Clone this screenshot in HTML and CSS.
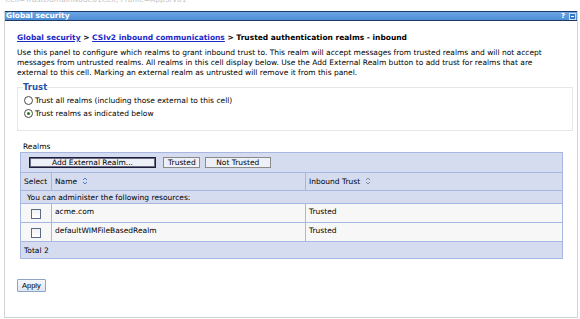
FILE: index.html
```html
<!DOCTYPE html>
<html lang="en">
<head>
  <meta charset="UTF-8">
  <title>Trusted authentication realms - inbound</title>
  <link rel="stylesheet" href="styles.css">
</head>
<body>
  <div class="cell-line">Cell=TrustDomainNode01Cell, Profile=AppSrv01</div>
  <div class="portlet">
    <div class="portlet-title">
      <span class="title-text">Global security</span>
      <span class="title-icons">
        <span class="help-icon">?</span>
        <span class="min-icon"></span>
      </span>
    </div>
    <div class="portlet-body">
      <div class="breadcrumb">
        <a href="#">Global security</a> &gt; <a href="#">CSIv2 inbound communications</a> &gt; <b>Trusted authentication realms - inbound</b>
      </div>
      <p class="desc">Use this panel to configure which realms to grant inbound trust to. This realm will accept messages from trusted realms and will not accept messages from untrusted realms. All realms in this cell display below. Use the Add External Realm button to add trust for realms that are external to this cell. Marking an external realm as untrusted will remove it from this panel.</p>

      <fieldset class="trust">
        <legend>Trust</legend>
        <label class="radio-row"><span class="radio"></span>Trust all realms (including those external to this cell)</label>
        <label class="radio-row"><span class="radio checked"></span>Trust realms as indicated below</label>
      </fieldset>

      <div class="realms-label">Realms</div>
      <table class="realms">
        <tr class="button-row">
          <td colspan="3">
            <button class="tbl-btn focused">Add External Realm...</button>
            <button class="tbl-btn btn-trusted">Trusted</button>
            <button class="tbl-btn btn-not">Not Trusted</button>
          </td>
        </tr>
        <tr class="head-row">
          <th class="col-select">Select</th>
          <th class="col-name">Name <svg class="sort" width="6" height="8" viewBox="0 0 6 8"><path d="M1 3 L3 1 L5 3 M1 5 L3 7 L5 5" fill="none" stroke="#4f7bc9" stroke-width="1"/></svg></th>
          <th>Inbound Trust <svg class="sort" width="6" height="8" viewBox="0 0 6 8"><path d="M1 3 L3 1 L5 3 M1 5 L3 7 L5 5" fill="none" stroke="#6b7590" stroke-width="0.8"/></svg></th>
        </tr>
        <tr class="info-row">
          <td colspan="3">You can administer the following resources:</td>
        </tr>
        <tr class="data-row">
          <td class="check-cell"><span class="checkbox"></span></td>
          <td>acme.com</td>
          <td>Trusted</td>
        </tr>
        <tr class="data-row">
          <td class="check-cell"><span class="checkbox"></span></td>
          <td>defaultWIMFileBasedRealm</td>
          <td>Trusted</td>
        </tr>
        <tr class="total-row">
          <td colspan="3">Total 2</td>
        </tr>
      </table>

      <button class="apply">Apply</button>
    </div>
  </div>
</body>
</html>
```

FILE: styles.css
```css
body {
  margin: 0;
  background-color: white;
  font-family: "DejaVu Sans", Verdana, sans-serif;
  font-size: 7.5px;
  color: #000;
}
.cell-line {
  height: 7px;
  line-height: 8px;
  margin-top: -4px;
  padding-left: 5px;
  color: #c4c4c4;
  font-size: 7.5px;
  overflow: hidden;
}
.portlet {
  margin: 8px 2px 0 4px;
  border: 1px solid #d4d4d4;
  border-top: none;
  height: 306px;
}
.portlet-title {
  display: flex;
  justify-content: space-between;
  align-items: center;
  height: 8px;
  background: linear-gradient(#6ba5e4, #4f8fd6);
  border-top: 1px solid #1d3a66;
  border-bottom: 1px solid #1d3a66;
  padding-left: 1px;
}
.title-text {
  color: white;
  font-weight: bold;
  font-size: 7.5px;
  line-height: 8px;
}
.title-icons {
  display: flex;
  align-items: center;
  gap: 4px;
  padding-right: 1px;
}
.help-icon {
  color: white;
  font-weight: bold;
  font-size: 7px;
  line-height: 8px;
}
.min-icon {
  width: 7px;
  height: 7px;
  background-color: #3a78c0;
  border: 1px solid #c8dcf2;
  box-sizing: border-box;
  position: relative;
}
.min-icon::after {
  content: "";
  position: absolute;
  left: 1px;
  right: 1px;
  top: 2px;
  height: 1px;
  background: white;
}
.portlet-body {
  padding: 12px 11px 0 12px;
}
.breadcrumb {
  line-height: 10px;
  font-weight: bold;
}
.breadcrumb a {
  color: #1a29c9;
  text-decoration: underline;
}
.desc {
  margin: 5px 0 0 0;
  line-height: 10px;
  padding-right: 10px;
}
.trust {
  margin: 4px 0 0 0;
  width: 548px;
  border: 1px solid #e6e6e6;
  padding: 2px 0 10px 6px;
  box-sizing: content-box;
}
.trust legend {
  color: #2552a4;
  font-weight: bold;
  font-size: 8.5px;
  line-height: 10px;
  padding: 0;
  margin-left: -1px;
}
.radio-row {
  display: flex;
  align-items: center;
  gap: 2px;
  height: 13px;
}
.radio {
  width: 7px;
  height: 7px;
  border: 1px solid #4a4a4a;
  border-radius: 50%;
  background: white;
  position: relative;
}
.radio.checked::after {
  content: "";
  position: absolute;
  left: 2px;
  top: 2px;
  width: 3px;
  height: 3px;
  border-radius: 50%;
  background: #1c7a1c;
}
.realms-label {
  margin-top: 12px;
  padding-left: 6px;
  line-height: 8px;
}
.realms {
  margin: 1px 0 0 3px;
  width: 543px;
  border-collapse: collapse;
  border: 1px solid #a8b7e2;
  background-color: #d6dcf0;
}
.realms td, .realms th {
  text-align: left;
  font-weight: normal;
  padding: 0 0 0 3px;
  vertical-align: middle;
}
.button-row td {
  height: 19px;
  padding-left: 8px;
  border-bottom: 1px solid #a8b7e2;
}
.tbl-btn {
  font-family: "DejaVu Sans", Verdana, sans-serif;
  font-size: 7.5px;
  height: 11px;
  padding: 0;
  margin-right: 2px;
  background: #eef0f8;
  border: 1px solid #8a8a8a;
  border-radius: 0;
  line-height: 9px;
}
.tbl-btn.focused {
  width: 127px;
  margin-right: 5px;
  border: 1px solid #1c1c3c;
  box-shadow: inset 0 0 0 1px #6a6a80;
}
.btn-trusted {
  width: 37px;
}
.btn-not {
  width: 66px;
}
.head-row th {
  height: 17px;
  border-bottom: 1px solid #a8b7e2;
}
.col-select {
  width: 27px;
  border-right: 1px solid #a8b7e2;
}
.col-name {
  width: 250px;
  border-right: 1px solid #a8b7e2;
}
.sort {
  vertical-align: -1px;
  margin-left: 2px;
}
.info-row td {
  height: 12px;
  padding-left: 6px;
  border-bottom: 1px solid #a8b7e2;
}
.data-row td {
  height: 19px;
  background: #f7f7f7;
  border-bottom: 1px solid #a8b7e2;
  border-right: 1px solid #a8b7e2;
  vertical-align: top;
  padding-top: 3px;
  box-sizing: border-box;
}
.data-row .check-cell {
  vertical-align: middle;
  padding: 0;
  text-align: center;
}
.checkbox {
  display: inline-block;
  width: 8px;
  height: 8px;
  border: 1px solid #5b6a86;
  background: linear-gradient(#f0f0f0, #ffffff);
  margin-top: 3px;
}
.total-row td {
  height: 16px;
}
.apply {
  display: block;
  margin-top: 20px;
  font-family: "Liberation Sans", Arial, sans-serif;
  font-size: 7.5px;
  height: 13px;
  padding: 0 4px;
  background: linear-gradient(#f6f8fc, #dde6f4);
  border: 1px solid #8fa3c5;
  border-radius: 1px;
}
```
